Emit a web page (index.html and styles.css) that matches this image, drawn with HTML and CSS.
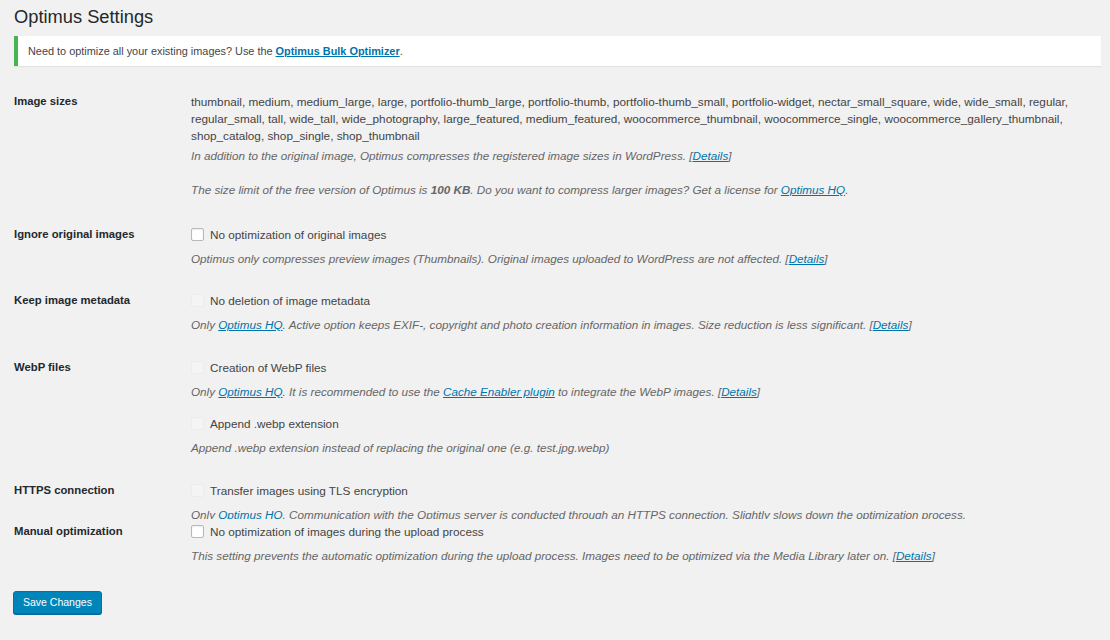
FILE: index.html
```html
<!DOCTYPE html>
<html lang="en">
<head>
<meta charset="utf-8">
<title>Optimus Settings</title>
<link rel="stylesheet" href="styles.css">
</head>
<body>
<div class="wrap">
  <h1 class="title">Optimus Settings</h1>
  <div class="notice">
    Need to optimize all your existing images? Use the <a class="notice-link" href="#">Optimus Bulk Optimizer</a>.
  </div>

  <form class="settings">
    <div class="row row-first">
      <div class="th">Image sizes</div>
      <div class="td">
        <div class="sizes">thumbnail, medium, medium_large, large, portfolio-thumb_large, portfolio-thumb, portfolio-thumb_small, portfolio-widget, nectar_small_square, wide, wide_small, regular,<br>regular_small, tall, wide_tall, wide_photography, large_featured, medium_featured, woocommerce_thumbnail, woocommerce_single, woocommerce_gallery_thumbnail,<br>shop_catalog, shop_single, shop_thumbnail</div>
        <p class="desc desc-tight">In addition to the original image, Optimus compresses the registered image sizes in WordPress. [<a href="#">Details</a>]<br><br>The size limit of the free version of Optimus is <b>100 KB</b>. Do you want to compress larger images? Get a license for <a href="#">Optimus HQ</a>.</p>
      </div>
    </div>

    <div class="row row-second">
      <div class="th">Ignore original images</div>
      <div class="td">
        <label class="check"><span class="box"></span>No optimization of original images</label>
        <p class="desc">Optimus only compresses preview images (Thumbnails). Original images uploaded to WordPress are not affected. [<a href="#">Details</a>]</p>
      </div>
    </div>

    <div class="row">
      <div class="th">Keep image metadata</div>
      <div class="td">
        <label class="check"><span class="box box-disabled"></span>No deletion of image metadata</label>
        <p class="desc">Only <a href="#">Optimus HQ</a>. Active option keeps EXIF-, copyright and photo creation information in images. Size reduction is less significant. [<a href="#">Details</a>]</p>
      </div>
    </div>

    <div class="row">
      <div class="th">WebP files</div>
      <div class="td">
        <label class="check"><span class="box box-disabled"></span>Creation of WebP files</label>
        <p class="desc">Only <a href="#">Optimus HQ</a>. It is recommended to use the <a href="#">Cache Enabler plugin</a> to integrate the WebP images. [<a href="#">Details</a>]</p>
        <label class="check check-next"><span class="box box-disabled"></span>Append .webp extension</label>
        <p class="desc">Append .webp extension instead of replacing the original one (e.g. test.jpg.webp)</p>
      </div>
    </div>

    <div class="row row-clipped">
      <div class="th">HTTPS connection</div>
      <div class="td">
        <label class="check"><span class="box box-disabled"></span>Transfer images using TLS encryption</label>
        <p class="desc">Only <a class="plain" href="#">Optimus HQ</a>. Communication with the Optimus server is conducted through an HTTPS connection. Slightly slows down the optimization process.</p>
      </div>
    </div>

    <div class="row row-after-clip">
      <div class="th">Manual optimization</div>
      <div class="td">
        <label class="check"><span class="box"></span>No optimization of images during the upload process</label>
        <p class="desc">This setting prevents the automatic optimization during the upload process. Images need to be optimized via the Media Library later on. [<a href="#">Details</a>]</p>
      </div>
    </div>

    <div class="submit">
      <button type="button" class="button-primary">Save Changes</button>
    </div>
  </form>
</div>
</body>
</html>
```

FILE: styles.css
```css
html, body {
  margin: 0;
  padding: 0;
  background: #f1f1f1;
}

body {
  font-family: "Liberation Sans", Arial, sans-serif;
  font-size: 11.75px;
  line-height: 17px;
  color: #444;
  height: 640px;
  overflow: hidden;
}

.wrap {
  padding: 0 9px 0 14px;
}

.title {
  margin: 0;
  padding-top: 6px;
  font-size: 18.3px;
  line-height: 22px;
  font-weight: 400;
  color: #23282d;
}

.notice {
  margin-top: 8px;
  height: 30px;
  line-height: 30px;
  background: #fff;
  border-left: 4px solid #46b450;
  box-shadow: 0 1px 1px rgba(0, 0, 0, 0.06);
  padding: 0 10px;
  font-size: 10.9px;
  color: #444;
}

a {
  color: #0073aa;
  text-decoration: underline;
}

.notice-link {
  font-weight: 700;
}

a.plain {
  text-decoration: none;
}

.settings {
  margin: 14px 0 0;
}

.row {
  display: flex;
  padding: 13px 0;
}

.row-first {
  padding-bottom: 15px;
}

.row-second {
  padding-bottom: 12px;
}

.row-clipped {
  height: 50px;
  padding-bottom: 0;
  overflow: hidden;
  box-sizing: border-box;
}

.row-after-clip {
  padding-top: 4px;
}

.th {
  width: 177px;
  flex: none;
  font-size: 11.3px;
  font-weight: 700;
  color: #23282d;
}

.td {
  flex: 1;
  min-width: 0;
}

.sizes {
  white-space: nowrap;
}

.desc {
  margin: 7px 0 0;
  font-size: 11.7px;
  font-style: italic;
  color: #666;
}

.desc-tight {
  margin-top: 3px;
}

.check {
  display: flex;
  align-items: center;
  gap: 6px;
}

.check-next {
  margin-top: 15px;
}

.box {
  width: 13px;
  height: 13px;
  flex: none;
  box-sizing: border-box;
  border: 1px solid #b4b9be;
  border-radius: 2px;
  background: #fff;
  box-shadow: inset 0 1px 2px rgba(0, 0, 0, 0.07);
}

.box-disabled {
  border-color: #ececec;
  background: #f4f4f4;
  box-shadow: none;
}

.submit {
  margin-top: 14px;
}

.button-primary {
  display: block;
  height: 23px;
  margin: 0 0 0 -1px;
  padding: 0 9px;
  background: #0085ba;
  border: 1px solid #0073aa;
  border-radius: 3px;
  box-shadow: 0 1px 0 #006799;
  color: #fff;
  font-family: "Liberation Sans", Arial, sans-serif;
  font-size: 10.5px;
  line-height: 21px;
  cursor: pointer;
}
```
